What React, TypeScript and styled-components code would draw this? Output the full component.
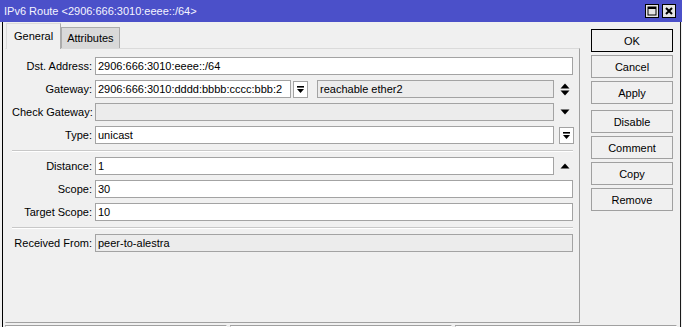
import React from "react";
import styled, { createGlobalStyle } from "styled-components";

const Global = createGlobalStyle`
  html, body { margin: 0; padding: 0; background: #f0f0f0; }
  body { font-family: "Liberation Sans", Arial, sans-serif; font-size: 11px; color: #000; }
`;

const Window = styled.div`
  width: 682px;
  height: 327px;
  display: flex;
  flex-direction: column;
  overflow: hidden;
  background: #f0f0f0;
`;

const TitleBar = styled.div`
  height: 22px;
  flex: none;
  background: #4b50c9;
  display: flex;
  align-items: center;
  padding: 0 6px 0 4px;
  box-sizing: border-box;
`;

const TitleText = styled.div`
  flex: 1;
  color: #f4f4ff;
  font-size: 11px;
  white-space: nowrap;
  padding-bottom: 1px;
`;

const TitleButtons = styled.div`
  display: flex;
  gap: 3px;
`;

const TitleButton = styled.div`
  width: 14px;
  height: 14px;
  box-sizing: border-box;
  border: 1px solid #000;
  background: #e4e4e4;
  display: flex;
  align-items: center;
  justify-content: center;
`;

const Frame = styled.div`
  flex: 1;
  margin: 0 1px 0 2px;
  border-left: 1px solid #000;
  border-right: 1px solid #1a1a1a;
  display: flex;
  flex-direction: column;
  min-height: 0;
`;

const Main = styled.div`
  height: 301px;
  flex: none;
  display: flex;
`;

const LeftPane = styled.div`
  margin-left: 2px;
  width: 575px;
  display: flex;
  flex-direction: column;
`;

const TabStrip = styled.div`
  height: 26px;
  flex: none;
  display: flex;
  align-items: flex-end;
  padding-left: 1px;
`;

const Tab = styled.div<{ $active?: boolean }>`
  box-sizing: border-box;
  height: ${(p) => (p.$active ? "26px" : "21px")};
  padding: ${(p) => (p.$active ? "0 7px 2px 7px" : "0 5px")};
  display: flex;
  align-items: center;
  justify-content: center;
  background: ${(p) => (p.$active ? "#f0f0f0" : "#d9d9d9")};
  border: 1px solid ${(p) => (p.$active ? "#dadada" : "#ababab")};
  border-bottom: none;
  border-right-color: #ababab;
  margin-bottom: ${(p) => (p.$active ? "-1px" : "0")};
  position: relative;
  z-index: ${(p) => (p.$active ? 1 : 0)};
  color: #000;
`;

const Panel = styled.div`
  flex: 1;
  box-sizing: border-box;
  border: 1px solid #a0a0a0;
  border-top-color: #dadada;
  border-left-color: #f0f0f0;
  padding: 8px 6px 0 6px;
  display: flex;
  flex-direction: column;
  gap: 5px;
`;

const Row = styled.div`
  display: grid;
  grid-template-columns: 80px 1fr;
  column-gap: 3px;
  height: 18px;
  align-items: center;
`;

const Label = styled.div`
  text-align: right;
  white-space: nowrap;
  color: #000;
`;

const FieldLine = styled.div`
  display: flex;
  align-items: center;
  height: 18px;
  min-width: 0;
`;

const Field = styled.div<{ $readOnly?: boolean; $width?: number }>`
  box-sizing: border-box;
  height: 18px;
  ${(p) => (p.$width ? `width: ${p.$width}px; flex: none;` : "flex: 1;")}
  min-width: 0;
  border: 1px solid #a3a3a3;
  background: ${(p) => (p.$readOnly ? "#ececec" : "#ffffff")};
  padding: 0 2px;
  line-height: 16px;
  white-space: nowrap;
  overflow: hidden;
  color: #000;
`;

const DropButton = styled.div<{ $gapAfter?: number }>`
  box-sizing: border-box;
  flex: none;
  width: 15px;
  height: 17px;
  margin-left: 2px;
  margin-right: ${(p) => p.$gapAfter ?? 0}px;
  border: 1px solid #a3a3a3;
  background: #fff;
  display: flex;
  align-items: center;
  justify-content: center;
`;

const Trail = styled.div`
  flex: none;
  width: 16px;
  height: 18px;
  margin-left: 3px;
  display: flex;
  align-items: center;
  justify-content: center;
`;

const Separator = styled.div`
  height: 0;
  border-top: 1px solid #c8c8c8;
  border-bottom: 1px solid #ffffff;
  margin: 1px 0 0 0;
`;

const ButtonColumn = styled.div`
  margin-left: 11px;
  width: 82px;
  padding-top: 7px;
  display: flex;
  flex-direction: column;
`;

const ActionButton = styled.div<{ $default?: boolean; $extraGap?: boolean }>`
  box-sizing: border-box;
  height: 23px;
  margin-bottom: 3px;
  margin-top: ${(p) => (p.$extraGap ? "3px" : "0")};
  border: 1px solid ${(p) => (p.$default ? "#000" : "#a0a0a0")};
  background: #f0f0f0;
  display: flex;
  align-items: center;
  justify-content: center;
  color: #000;
`;

const StatusBar = styled.div`
  margin-top: 2px;
  display: grid;
  grid-template-columns: repeat(3, 1fr);
  column-gap: 3px;
  padding: 0 3px 0 2px;
  height: 20px;
`;

const StatusCell = styled.div`
  border: 1px solid #a0a0a0;
  border-right-color: #fff;
  border-bottom-color: #fff;
`;

const MoreIcon = () => (
  <svg width="9" height="9" viewBox="0 0 9 9">
    <rect x="1" y="1" width="7" height="1.6" fill="#000" />
    <polygon points="1,4 8,4 4.5,8" fill="#000" />
  </svg>
);

const UpDownIcon = () => (
  <svg width="10" height="13" viewBox="0 0 10 13">
    <polygon points="0.5,5.5 9.5,5.5 5,0.5" fill="#000" />
    <polygon points="0.5,7.5 9.5,7.5 5,12.5" fill="#000" />
  </svg>
);

const DownIcon = () => (
  <svg width="10" height="6" viewBox="0 0 10 6">
    <polygon points="0.5,0.5 9.5,0.5 5,5.5" fill="#000" />
  </svg>
);

const UpIcon = () => (
  <svg width="10" height="6" viewBox="0 0 10 6">
    <polygon points="0.5,5.5 9.5,5.5 5,0.5" fill="#000" />
  </svg>
);

const MaxIcon = () => (
  <svg width="10" height="10" viewBox="0 0 10 10">
    <rect x="1" y="1" width="8" height="8" fill="none" stroke="#000" strokeWidth="1" />
    <rect x="1" y="1" width="8" height="2" fill="#000" />
  </svg>
);

const CloseIcon = () => (
  <svg width="10" height="10" viewBox="0 0 10 10">
    <path d="M2 2 L8 8 M8 2 L2 8" stroke="#000" strokeWidth="2" />
  </svg>
);

export default function App() {
  return (
    <>
      <Global />
      <Window>
        <TitleBar>
          <TitleText>IPv6 Route &lt;2906:666:3010:eeee::/64&gt;</TitleText>
          <TitleButtons>
            <TitleButton><MaxIcon /></TitleButton>
            <TitleButton><CloseIcon /></TitleButton>
          </TitleButtons>
        </TitleBar>
        <Frame>
          <Main>
            <LeftPane>
              <TabStrip>
                <Tab $active>General</Tab>
                <Tab>Attributes</Tab>
              </TabStrip>
              <Panel>
                <Row>
                  <Label>Dst. Address:</Label>
                  <FieldLine><Field>2906:666:3010:eeee::/64</Field></FieldLine>
                </Row>
                <Row>
                  <Label>Gateway:</Label>
                  <FieldLine>
                    <Field $width={196}>2906:666:3010:dddd:bbbb:cccc:bbb:2</Field>
                    <DropButton $gapAfter={9}><MoreIcon /></DropButton>
                    <Field $readOnly>reachable ether2</Field>
                    <Trail><UpDownIcon /></Trail>
                  </FieldLine>
                </Row>
                <Row>
                  <Label>Check Gateway:</Label>
                  <FieldLine>
                    <Field $readOnly />
                    <Trail><DownIcon /></Trail>
                  </FieldLine>
                </Row>
                <Row>
                  <Label>Type:</Label>
                  <FieldLine>
                    <Field>unicast</Field>
                    <Trail><DropButton><MoreIcon /></DropButton></Trail>
                  </FieldLine>
                </Row>
                <Separator />
                <Row>
                  <Label>Distance:</Label>
                  <FieldLine>
                    <Field>1</Field>
                    <Trail><UpIcon /></Trail>
                  </FieldLine>
                </Row>
                <Row>
                  <Label>Scope:</Label>
                  <FieldLine><Field>30</Field></FieldLine>
                </Row>
                <Row>
                  <Label>Target Scope:</Label>
                  <FieldLine><Field>10</Field></FieldLine>
                </Row>
                <Separator />
                <Row>
                  <Label>Received From:</Label>
                  <FieldLine><Field $readOnly>peer-to-alestra</Field></FieldLine>
                </Row>
              </Panel>
            </LeftPane>
            <ButtonColumn>
              <ActionButton $default>OK</ActionButton>
              <ActionButton>Cancel</ActionButton>
              <ActionButton>Apply</ActionButton>
              <ActionButton $extraGap>Disable</ActionButton>
              <ActionButton>Comment</ActionButton>
              <ActionButton>Copy</ActionButton>
              <ActionButton>Remove</ActionButton>
            </ButtonColumn>
          </Main>
          <StatusBar>
            <StatusCell />
            <StatusCell />
            <StatusCell />
          </StatusBar>
        </Frame>
      </Window>
    </>
  );
}
